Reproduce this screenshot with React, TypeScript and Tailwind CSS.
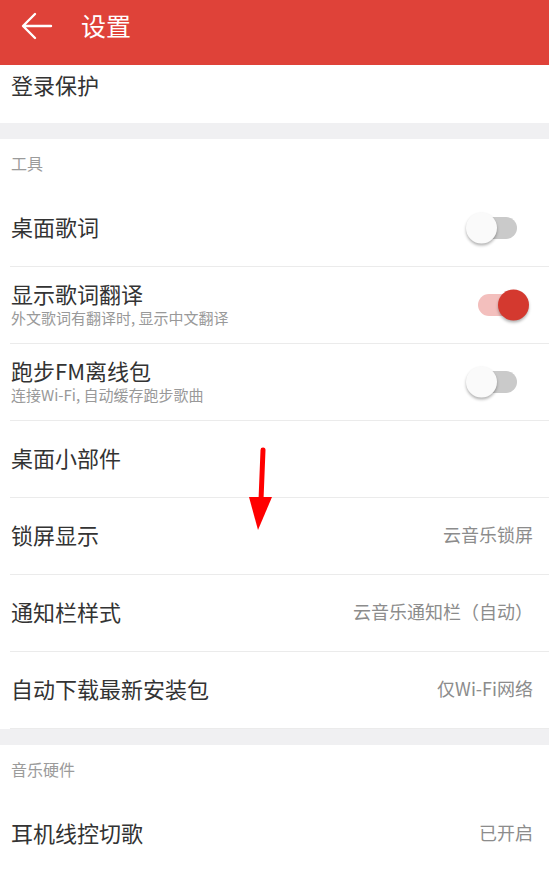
const font = { fontFamily: '"Noto Sans CJK SC", "Noto Sans", sans-serif' }

function Toggle({ on }: { on: boolean }) {
  return (
    <div className="relative h-[22px] w-[47px]">
      <div className={`absolute inset-0 rounded-full ${on ? 'bg-[#f3bfbd]' : 'bg-[#cacaca]'}`} />
      <div
        className={`absolute top-1/2 h-[31px] w-[31px] -translate-y-1/2 rounded-full shadow-[0_2px_3px_rgba(0,0,0,0.3)] ${
          on ? 'right-[-4px] bg-[#d4392f]' : 'left-[-4px] bg-[#fafafa]'
        }`}
      />
    </div>
  )
}

function Row({ title, sub, value, toggle }: { title: string; sub?: string; value?: string; toggle?: boolean }) {
  return (
    <div className="ml-[10px] flex h-[77px] items-center justify-between border-b border-[#ebebeb] pr-[16px]">
      <div className="flex flex-col pb-[4px] pl-[1px]">
        <span className="text-[22px] leading-[28px] text-[#333]">{title}</span>
        {sub && <span className="mt-[1px] text-[15px] leading-[20px] text-[#999]">{sub}</span>}
      </div>
      {value && <span className="pb-[4px] text-[18px] text-[#8c8c8c]">{value}</span>}
      {toggle !== undefined && (
        <div className={toggle ? 'mr-[8px]' : 'mr-[16px]'}>
          <Toggle on={toggle} />
        </div>
      )}
    </div>
  )
}

function Label({ text }: { text: string }) {
  return (
    <div className="flex h-[51px] items-center pb-[3px] pl-[11px] text-[16px] text-[#9b9b9b]">{text}</div>
  )
}

export default function App() {
  return (
    <div className="relative h-[872px] w-[549px] overflow-hidden bg-white" style={font}>
      {/* header */}
      <div className="flex h-[65px] items-center bg-[#df4239] text-white">
        <svg className="ml-[21px] mb-[14px]" width="32" height="28" viewBox="0 0 32 28" fill="none">
          <path d="M30 14H3M14 2L2 14l12 12" stroke="white" strokeWidth="2.4" strokeLinecap="round" strokeLinejoin="round" />
        </svg>
        <span className="ml-[28px] mb-[14px] text-[25px]">设置</span>
      </div>

      <div className="flex h-[58px] items-center pb-[20px] pl-[11px] text-[22px] text-[#333]">登录保护</div>
      <div className="h-[16px] bg-[#f0f0f2]" />

      <Label text="工具" />
      <Row title="桌面歌词" toggle={false} />
      <Row title="显示歌词翻译" sub="外文歌词有翻译时, 显示中文翻译" toggle={true} />
      <Row title="跑步FM离线包" sub="连接Wi-Fi, 自动缓存跑步歌曲" toggle={false} />
      <Row title="桌面小部件" />
      <Row title="锁屏显示" value="云音乐锁屏" />
      <Row title="通知栏样式" value="云音乐通知栏（自动）" />
      <Row title="自动下载最新安装包" value="仅Wi-Fi网络" />
      <div className="h-[16px] bg-[#f0f0f2]" />

      <Label text="音乐硬件" />
      <Row title="耳机线控切歌" value="已开启" />

      {/* annotation arrow */}
      <svg className="pointer-events-none absolute left-[244px] top-[444px]" width="34" height="90" viewBox="0 0 34 90">
        <path d="M19 6L17 56" stroke="#ff0000" strokeWidth="5" strokeLinecap="round" />
        <path d="M5 53L28 53L14 86Z" fill="#ff0000" />
      </svg>
    </div>
  )
}
